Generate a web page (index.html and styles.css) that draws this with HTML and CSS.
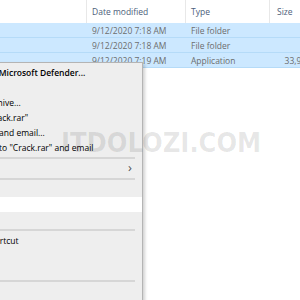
FILE: index.html
```html
<!DOCTYPE html>
<html lang="en">
<head>
  <meta charset="UTF-8" />
  <title>Explorer context menu</title>
  <link rel="stylesheet" href="styles.css">
</head>
<body>
  <div class="explorer">
    <div class="list-head">
      <div class="cell name"></div>
      <div class="cell">Date modified</div>
      <div class="cell">Type</div>
      <div class="cell size-head">Size</div>
    </div>
    <div class="list-row selected">
      <div class="cell name"></div>
      <div class="cell">9/12/2020 7:18 AM</div>
      <div class="cell">File folder</div>
      <div class="cell size"></div>
    </div>
    <div class="list-row selected">
      <div class="cell name"></div>
      <div class="cell">9/12/2020 7:18 AM</div>
      <div class="cell">File folder</div>
      <div class="cell size"></div>
    </div>
    <div class="list-row selected">
      <div class="cell name"></div>
      <div class="cell">9/12/2020 7:19 AM</div>
      <div class="cell">Application</div>
      <div class="cell size">33,930 KB</div>
    </div>
  </div>

  <div class="menu">
    <div class="item bold">Scan with Microsoft Defender...</div>
    <div class="item">Share</div>
    <div class="item">Add to archive...</div>
    <div class="item">Add to "Crack.rar"</div>
    <div class="item">Compress and email...</div>
    <div class="item">Compress to "Crack.rar" and email</div>
    <div class="sep"></div>
    <div class="item sub">Send to <span class="arrow">&#x203A;</span></div>
    <div class="sep"></div>
    <div class="item">Cut</div>
    <div class="item hover">Copy</div>
    <div class="item">Paste</div>
    <div class="sep"></div>
    <div class="item">Create shortcut</div>
    <div class="item">Delete</div>
    <div class="item">Rename</div>
    <div class="sep"></div>
    <div class="item">Properties</div>
  </div>

  <div class="watermark">ITDOLOZI.COM</div>
</body>
</html>
```

FILE: styles.css
```css
* {
  margin: 0;
  padding: 0;
  box-sizing: border-box;
}
body {
  width: 300px;
  height: 300px;
  overflow: hidden;
  position: relative;
  background: #fff;
  font-family: 'Open Sans', 'Noto Sans', sans-serif;
  font-size: 8.5px;
  color: #000;
}
.explorer {
  width: 330px;
}
.list-head,
.list-row {
  display: grid;
  grid-template-columns: 87px 99px 84px 58px;
  align-items: center;
}
.list-head {
  height: 23px;
  color: #4c607a;
}
.list-head .cell {
  height: 23px;
  line-height: 23px;
  padding-left: 5px;
  border-right: 1px solid #e8e8e8;
}
.list-head .size-head {
  padding-left: 7px;
  border-right: none;
}
.list-row {
  height: 15px;
  color: #6d6d6d;
}
.list-row .cell {
  padding-left: 5px;
  white-space: nowrap;
}
.list-row .size {
  text-align: right;
  padding-right: 4px;
}
.selected {
  background: #cce8ff;
  border-bottom: 1px solid #b5dbf8;
}

/* context menu overlaps the list */
.menu {
  position: absolute;
  top: 62px;
  left: -80px;
  width: 223px;
  height: 260px;
  padding-top: 2px;
  background: #eeeeee;
  border: 1px solid #b4b4b4;
  box-shadow: 2px 2px 3px rgba(0, 0, 0, 0.18);
}
.item {
  height: 15px;
  line-height: 15px;
  padding-left: 36px;
  padding-right: 12px;
  white-space: nowrap;
  position: relative;
}
.item.bold {
  font-weight: 600;
}
.item.hover {
  background: #fff;
}
.arrow {
  position: absolute;
  right: 10px;
  top: -1px;
  font-size: 13px;
  color: #555;
}
.sep {
  height: 6px;
  margin-right: 7px;
  padding-top: 2px;
}
.sep::after {
  content: '';
  display: block;
  height: 2px;
  background: #d6d6d6;
}

.watermark {
  position: absolute;
  left: 61px;
  top: 127px;
  font-family: 'DejaVu Sans', sans-serif;
  font-weight: 700;
  font-size: 27px;
  color: rgba(0, 0, 0, 0.1);
  white-space: nowrap;
  transform: scaleX(0.9);
  transform-origin: left top;
}
```
